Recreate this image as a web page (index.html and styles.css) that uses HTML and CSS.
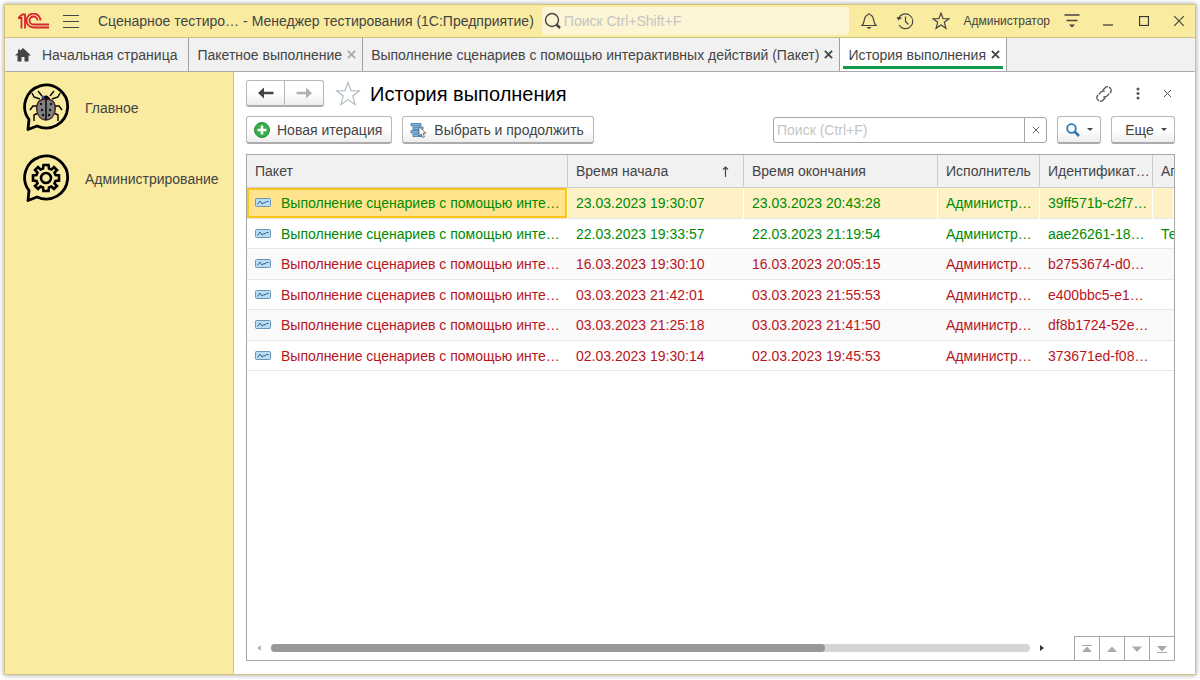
FILE: index.html
```
<!DOCTYPE html>
<html lang="ru">
  <head>
    <meta charset="utf-8" />
    <meta name="viewport" content="width=device-width, initial-scale=1.0" />
    <title>История выполнения</title>
    <link rel="stylesheet" href="styles.css" />
  </head>
  <body>
    <svg class="defs" width="0" height="0">
      <symbol id="pack" viewBox="0 0 16 10">
        <rect x="0.5" y="0.5" width="15" height="8" rx="1" fill="#b9dcf5" stroke="#6d94b5" />
        <path d="M2.5 6.5 5 3 7 6 9 4.5 10 5 11.500 3.500H13.500" fill="none" stroke="#2b6390" />
      </symbol>
      <symbol id="cross" viewBox="0 0 10 10">
        <path d="M1 1 9 9M9 1 1 9" fill="none" stroke="currentColor" />
      </symbol>
      <symbol id="star" viewBox="0 0 24 24">
        <path d="M12 1.500 14.800 9H22.500L16.400 13.800 18.600 21.800 12 17.200 5.400 21.800 7.600 13.800 1.500 9H9.200Z" fill="none" stroke="currentColor" />
      </symbol>
      <symbol id="bubble" viewBox="0 0 48 52">
        <path d="M6 37.500A21.500 21.500 0 1 1 14 44L5 47.500Z" fill="none" stroke="#000" stroke-width="2.800" stroke-linejoin="round" />
      </symbol>
    </svg>

    <div class="window">
      <header class="titlebar">
        <svg class="logo" viewBox="0 0 32 16" fill="none" stroke="#d9272e" stroke-width="1.800">
          <path d="M0 5H3.500V15.500M1 4 4.500 1.500H7V15.500" />
          <path d="M22.500 7.500A7 7 0 1 0 15.500 14.500H31" />
          <path d="M19.500 7.500A4 4 0 1 0 15.500 11.500H31" />
        </svg>
        <button class="icon-btn menu" aria-label="Меню">
          <svg width="16" height="13" viewBox="0 0 16 13"><path d="M0 .5H16M0 6.500H16M0 12.500H16" stroke="#444" /></svg>
        </button>
        <span class="app-name">Сценарное тестиро…</span>
        <span class="app-title">- Менеджер тестирования (1С:Предприятие)</span>
        <label class="global-search">
          <svg width="18" height="18" viewBox="0 0 18 18" fill="none" stroke="#444"><circle cx="8" cy="8" r="6.500" stroke-width="1.400" /><path d="M12.500 12.500 16 16" stroke-width="2.500" /></svg>
          <input type="text" placeholder="Поиск Ctrl+Shift+F" aria-label="Поиск" />
        </label>
        <div class="tools">
          <button class="icon-btn" aria-label="Оповещения">
            <svg width="18" height="18" viewBox="0 0 18 18"><path d="M2 13.500C4.500 11 4 8 5 5.500 6 3 7.500 3.500 8 2.500Q9 1 10 2.500C10.500 3.500 12 3 13 5.500 14 8 13.500 11 16 13.500Z" fill="none" stroke="#444" stroke-width="1.200" /><path d="M6.500 15H11.500L9 17.200Z" fill="#444" /></svg>
          </button>
          <button class="icon-btn" aria-label="История">
            <svg width="18" height="18" viewBox="0 0 18 18" fill="none" stroke="#444" stroke-width="1.200"><path d="M2.500 6.500A7.400 7.400 0 1 1 3 13M9.500 4.500V9.500L12.500 12.500" /><path d="M.5 5 6 5.500 2.500 8.500Z" fill="#444" stroke="none" /></svg>
          </button>
          <button class="icon-btn" aria-label="Избранное">
            <svg width="18" height="18" viewBox="0 0 24 24" class="fav"><use href="#star" /></svg>
          </button>
          <span class="user">Администратор</span>
          <button class="icon-btn options" aria-label="Настройки">
            <svg width="16" height="14" viewBox="0 0 16 14"><path d="M.5 1H15.500M2.500 6.500H13.500" stroke="#444" stroke-width="1.400" /><path d="M5 10.500H11L8 13.500Z" fill="#444" /></svg>
          </button>
          <button class="icon-btn" aria-label="Свернуть">
            <svg width="10" height="10" viewBox="0 0 10 10"><path d="M0 9H10" stroke="#333" stroke-width="1.200" /></svg>
          </button>
          <button class="icon-btn" aria-label="Развернуть">
            <svg width="10" height="10" viewBox="0 0 10 10"><rect x=".5" y=".5" width="9" height="9" fill="none" stroke="#333" stroke-width="1.200" /></svg>
          </button>
          <button class="icon-btn quit" aria-label="Закрыть">
            <svg width="12" height="12"><use href="#cross" /></svg>
          </button>
        </div>
      </header>

      <nav class="tabs">
        <a class="tab home" href="#">
          <svg width="16" height="14" viewBox="0 0 16 14"><path d="M8 0 16 7.500H13.500V13.500H9.500V9H6.500V13.500H2.500V7.500H0L3 4.700V1.500H5V2.800Z" fill="#444" /></svg>
          Начальная страница
        </a>
        <a class="tab" href="#">Пакетное выполнение <svg class="close pale"><use href="#cross" /></svg></a>
        <a class="tab" href="#">Выполнение сценариев с помощью интерактивных действий (Пакет) <svg class="close"><use href="#cross" /></svg></a>
        <a class="tab active" href="#">История выполнения <svg class="close"><use href="#cross" /></svg></a>
      </nav>

      <div class="body">
        <aside class="sections">
          <a class="section" href="#">
            <svg width="48" height="52" viewBox="0 0 48 52">
              <use href="#bubble" />
              <g transform="translate(-1 0)">
                <path d="M20 14 16 9M28 14 32 9M18 17 12 15 10 11M30 17 36 15 38 11M15 24H11L8 28M33 24H37L40 28M16 31 12 33V39M32 31 36 33V39" fill="none" stroke="#000" stroke-width="1.400" />
                <path d="M19 18Q24 9 29 18Z" fill="#000" />
                <path d="M24 17C33 17 34 24 33 29 32 35 28 38 24 38 20 38 16 35 15 29 14 24 15 17 24 17Z" fill="#808080" stroke="#4a1c1c" stroke-width="1.400" />
                <path d="M24 17V38" stroke="#000" stroke-width="1.400" />
                <g fill="#111"><circle cx="19" cy="22" r="1.200" /><circle cx="29" cy="22" r="1.200" /><circle cx="20" cy="28" r="1.200" /><circle cx="28" cy="28" r="1.200" /><circle cx="21" cy="33" r="1.200" /><circle cx="27" cy="33" r="1.200" /></g>
                <circle cx="21" cy="15" r="1.500" fill="#2456a8" />
              </g>
            </svg>
            Главное
          </a>
          <a class="section" href="#">
            <svg width="48" height="52" viewBox="0 0 48 52">
              <use href="#bubble" />
              <g transform="translate(23 25)" fill="none" stroke="#000" stroke-width="2.600">
                <path d="M-2.500-13H2.500L3-9.500 5.500-8.500 8-11 11-8 8.500-5.500 9.500-3 13-2.500V2.500L9.500 3 8.500 5.500 11 8 8 11 5.500 8.500 3 9.500 2.500 13H-2.500L-3 9.500-5.500 8.500-8 11-11 8-8.500 5.500-9.500 3-13 2.500V-2.500L-9.500-3-8.500-5.500-11-8-8-11-5.500-8.500-3-9.500Z" />
                <circle r="5" />
              </g>
            </svg>
            Администрирование
          </a>
        </aside>

        <main class="content">
          <div class="heading">
            <div class="history">
              <button class="btn" aria-label="Назад"><svg width="16" height="12" viewBox="0 0 16 12"><path d="M0 6 6 .5V4.800H15.500V7.200H6V11.500Z" fill="#444" /></svg></button>
              <button class="btn" aria-label="Вперед"><svg width="16" height="12" viewBox="0 0 16 12"><path d="M16 6 10 .5V4.800H.5V7.200H10V11.500Z" fill="#b0b0b0" /></svg></button>
            </div>
            <button class="icon-btn star" aria-label="В избранное"><svg width="26" height="26"><use href="#star" /></svg></button>
            <h1>История выполнения</h1>
            <div class="heading-tools">
              <button class="icon-btn" aria-label="Ссылка">
                <svg width="18" height="18" viewBox="0 0 18 18" fill="none" stroke="#555" stroke-width="1.300"><path d="M7.500 5.500 10.500 2.500C13 0 18 4 15.500 7.500L12 11Q10 12.500 8 11.500M10.500 12.500 7.500 15.500C5 18 0 14 2.500 10.500L6 7Q8 5.500 10 6.500" stroke-dasharray="7 1" /></svg>
              </button>
              <button class="icon-btn" aria-label="Еще">
                <svg width="4" height="13" viewBox="0 0 4 13" fill="#555"><circle cx="2" cy="2" r="1.500" /><circle cx="2" cy="6.500" r="1.500" /><circle cx="2" cy="11" r="1.500" /></svg>
              </button>
              <button class="icon-btn" aria-label="Закрыть"><svg width="9" height="9"><use href="#cross" /></svg></button>
            </div>
          </div>

          <div class="commands">
            <button class="btn">
              <svg width="16" height="16" viewBox="0 0 16 16"><circle cx="8" cy="8" r="7.500" fill="#35ad49" stroke="#26923a" /><path d="M8 3.500V12.500M3.500 8H12.500" stroke="#fff" stroke-width="2.600" /></svg>
              Новая итерация
            </button>
            <button class="btn">
              <svg width="17" height="16" viewBox="0 0 17 16"><path d="M1 1.500H11V4H1ZM3 5H13V7.500H3ZM1 8.500H11V11H1ZM3 12H12V14.500H3Z" fill="#7db4e0" stroke="#3a77a8" stroke-width=".8" /><path d="M9 4.500V14L11.200 12 12.700 15.500 14.500 14.700 13 11.300H16Z" fill="#fff" stroke="#555" stroke-width=".8" /></svg>
              Выбрать и продолжить
            </button>
            <div class="search">
              <input type="text" placeholder="Поиск (Ctrl+F)" aria-label="Поиск в списке" />
              <button aria-label="Очистить"><svg width="8" height="8"><use href="#cross" /></svg></button>
            </div>
            <button class="btn find" aria-label="Найти">
              <svg width="14" height="14" viewBox="0 0 14 14" fill="none" stroke="#2c77b0"><circle cx="5.500" cy="5.500" r="4.300" stroke-width="1.800" /><path d="M8.500 8.500 13 13" stroke-width="2.600" /></svg>
              <span class="caret"></span>
            </button>
            <button class="btn more">Еще <span class="caret"></span></button>
          </div>

          <div class="list">
            <table>
              <colgroup>
                <col class="c-pack" /><col class="c-start" /><col class="c-end" /><col class="c-user" /><col class="c-id" /><col />
              </colgroup>
              <thead>
                <tr>
                  <th>Пакет</th>
                  <th><div class="sorted">Время начала <svg width="7" height="11" viewBox="0 0 7 11"><path d="M3.500 11V1M1 3.500 3.500 1 6 3.500" fill="none" stroke="#444" stroke-width="1.200" /></svg></div></th>
                  <th>Время окончания</th>
                  <th>Исполнитель</th>
                  <th>Идентификат…</th>
                  <th class="cut">Агент</th>
                </tr>
              </thead>
              <tbody>
                <tr class="ok selected">
                  <td><svg class="pack"><use href="#pack" /></svg>Выполнение сценариев с помощью инте…</td>
                  <td>23.03.2023 19:30:07</td><td>23.03.2023 20:43:28</td><td>Администр…</td><td>39ff571b-c2f7…</td><td></td>
                </tr>
                <tr class="ok">
                  <td><svg class="pack"><use href="#pack" /></svg>Выполнение сценариев с помощью инте…</td>
                  <td>22.03.2023 19:33:57</td><td>22.03.2023 21:19:54</td><td>Администр…</td><td>aae26261-18…</td><td class="cut">Тест</td>
                </tr>
                <tr class="fail">
                  <td><svg class="pack"><use href="#pack" /></svg>Выполнение сценариев с помощью инте…</td>
                  <td>16.03.2023 19:30:10</td><td>16.03.2023 20:05:15</td><td>Администр…</td><td>b2753674-d0…</td><td></td>
                </tr>
                <tr class="fail">
                  <td><svg class="pack"><use href="#pack" /></svg>Выполнение сценариев с помощью инте…</td>
                  <td>03.03.2023 21:42:01</td><td>03.03.2023 21:55:53</td><td>Администр…</td><td>e400bbc5-e1…</td><td></td>
                </tr>
                <tr class="fail">
                  <td><svg class="pack"><use href="#pack" /></svg>Выполнение сценариев с помощью инте…</td>
                  <td>03.03.2023 21:25:18</td><td>03.03.2023 21:41:50</td><td>Администр…</td><td>df8b1724-52e…</td><td></td>
                </tr>
                <tr class="fail">
                  <td><svg class="pack"><use href="#pack" /></svg>Выполнение сценариев с помощью инте…</td>
                  <td>02.03.2023 19:30:14</td><td>02.03.2023 19:45:53</td><td>Администр…</td><td>373671ed-f08…</td><td></td>
                </tr>
              </tbody>
            </table>
            <div class="list-footer">
              <svg width="4" height="6" viewBox="0 0 4 6"><path d="M4 0V6L0 3Z" fill="#bbb" /></svg>
              <div class="track"><div class="thumb"></div></div>
              <svg width="4" height="6" viewBox="0 0 4 6"><path d="M0 0V6L4 3Z" fill="#333" /></svg>
              <div class="pager">
                <button aria-label="В начало"><svg width="10" height="8" viewBox="0 0 10 8"><path d="M0 .5H10" stroke="#aaa" /><path d="M0 7 5 1.500 10 7Z" fill="#aaa" /></svg></button>
                <button aria-label="Вверх"><svg width="10" height="8" viewBox="0 0 10 8"><path d="M0 7 5 1.500 10 7Z" fill="#aaa" /></svg></button>
                <button aria-label="Вниз"><svg width="10" height="8" viewBox="0 0 10 8"><path d="M0 1.500 5 7 10 1.500Z" fill="#aaa" /></svg></button>
                <button aria-label="В конец"><svg width="10" height="8" viewBox="0 0 10 8"><path d="M0 7.500H10" stroke="#aaa" /><path d="M0 1 5 6.500 10 1Z" fill="#aaa" /></svg></button>
              </div>
            </div>
          </div>
        </main>
      </div>
    </div>
  </body>
</html>
```
FILE: styles.css
```
* {
  box-sizing: border-box;
}
body {
  margin: 0;
  padding: 4px 4px 5px;
  height: 100vh;
  background: #fff;
  color: #444;
  font: 14px/18px "Liberation Sans", Arial, sans-serif;
}
button,
input {
  font: inherit;
  color: inherit;
}
a {
  color: inherit;
  text-decoration: none;
}
svg {
  flex: none;
}
.defs {
  position: absolute;
}
.window {
  display: flex;
  flex-direction: column;
  height: 100%;
  border: 1px solid #d3c57e;
  background: #fff;
  box-shadow: 0 0 5px rgba(0, 0, 0, 0.4);
}

/* title bar */
.titlebar {
  display: flex;
  align-items: center;
  height: 33px;
  padding-left: 13px;
  background: #f9eb9f;
  border-bottom: 1px solid #cfc27f;
}
.icon-btn {
  display: flex;
  align-items: center;
  justify-content: center;
  padding: 0;
  border: 0;
  background: none;
}
.logo {
  width: 32px;
  height: 16px;
}
.menu {
  margin: 0 19px 0 13px;
}
.app-name,
.app-title {
  white-space: nowrap;
}
.app-title {
  margin-left: 4px;
}
.global-search {
  display: flex;
  flex: 1;
  align-items: center;
  height: 28px;
  margin: 0 2px 0 8px;
  padding-left: 2px;
  border-radius: 3px;
  background: #fdf5d3;
}
.global-search input {
  flex: 1;
  min-width: 0;
  padding: 0 2px;
  border: 0;
  background: none;
}
input::placeholder {
  color: #c4c4c4;
  opacity: 1;
}
.tools {
  display: flex;
  align-items: center;
}
.tools .icon-btn {
  width: 36px;
  height: 28px;
}
.tools .quit {
  width: 33px;
}
.user {
  margin: 0 4px;
  font-size: 12px;
}
.fav {
  stroke-width: 1.6;
}

/* open pages */
.tabs {
  display: flex;
  height: 34px;
  background: #f1f1f1;
  border-bottom: 1px solid #aaa;
}
.tab {
  display: flex;
  align-items: center;
  gap: 5px;
  padding: 0 6px 0 8px;
  border-right: 1px solid #a0a0a0;
  white-space: nowrap;
}
.tab.home {
  gap: 11px;
  padding: 0 11px 0 10px;
}
.tab.active {
  position: relative;
  background: #fff;
}
.tab.active::after {
  content: "";
  position: absolute;
  left: 3px;
  right: 3px;
  bottom: 2px;
  height: 3px;
  background: #129a4c;
}
.close {
  width: 9px;
  height: 9px;
  stroke-width: 2;
}
.close.pale {
  color: #aaa;
}

.body {
  display: flex;
  flex: 1;
  min-height: 0;
}
.sections {
  display: flex;
  flex-direction: column;
  gap: 19px;
  width: 229px;
  padding: 10px 0 0 18px;
  background: #f9eb9f;
  border-right: 1px solid #d3c57e;
}
.section {
  display: flex;
  align-items: center;
  gap: 14px;
}

/* page */
.content {
  display: flex;
  flex: 1;
  flex-direction: column;
  min-width: 0;
  padding: 8px 20px 13px 12px;
}
.heading,
.commands {
  display: flex;
  align-items: center;
}
.heading {
  height: 27px;
  margin-bottom: 9px;
}
.btn {
  display: flex;
  align-items: center;
  justify-content: center;
  gap: 7px;
  height: 28px;
  padding: 0 9px 0 7px;
  border: 1px solid #b8b8b8;
  border-bottom: 2px solid #ababab;
  border-radius: 3px;
  background: linear-gradient(#fff 50%, #ededed);
  white-space: nowrap;
}
.history {
  display: flex;
}
.history .btn {
  width: 39px;
  height: 27px;
  padding: 0;
}
.history .btn:first-child {
  border-radius: 3px 0 0 3px;
}
.history .btn:last-child {
  border-left: 0;
  border-radius: 0 3px 3px 0;
}
.star {
  margin: 0 9px 0 11px;
  color: #a9b7bf;
}
h1 {
  margin: 0;
  color: #000;
  font-size: 20px;
  font-weight: normal;
  line-height: 24px;
}
.heading-tools {
  display: flex;
  gap: 23px;
  margin-left: auto;
  padding-right: 3px;
}
.commands {
  gap: 10px;
  margin-bottom: 10px;
}
.search {
  display: flex;
  width: 274px;
  height: 26px;
  margin-left: auto;
  border: 1px solid #a6a6a6;
  border-radius: 3px;
}
.search input {
  flex: 1;
  min-width: 0;
  padding: 0 3px;
  border: 0;
  background: none;
}
.search button {
  display: flex;
  align-items: center;
  justify-content: center;
  width: 22px;
  padding: 0;
  border: 0;
  border-left: 1px solid #a6a6a6;
  background: none;
}
.btn.find {
  width: 44px;
  padding: 0 4px;
}
.btn.more {
  width: 64px;
  padding: 0 4px 0 10px;
}
.caret {
  border: 3px solid transparent;
  border-top-color: #444;
  border-bottom: 0;
}

/* list */
.list {
  display: flex;
  flex: 1;
  flex-direction: column;
  min-height: 0;
  overflow: hidden;
  border: 1px solid #a6a6a6;
}
table {
  width: 100%;
  table-layout: fixed;
  border-collapse: separate;
  border-spacing: 0;
}
.c-pack {
  width: 321px;
}
.c-start {
  width: 176px;
}
.c-end {
  width: 194px;
}
.c-user {
  width: 102px;
}
.c-id {
  width: 113px;
}
th,
td {
  padding: 0 2px 0 8px;
  overflow: hidden;
  text-align: left;
  text-overflow: ellipsis;
  white-space: nowrap;
}
th {
  height: 33px;
  background: #f1f1f1;
  border-right: 1px solid #ccc;
  border-bottom: 1px solid #ccc;
  font-weight: normal;
}
th:last-child {
  border-right: 0;
}
.cut {
  padding-right: 0;
  text-overflow: clip;
}
.sorted {
  display: flex;
  align-items: center;
  justify-content: space-between;
  padding-right: 12px;
}
td {
  height: 31px;
  border-bottom: 1px solid #e6e6e6;
}
tr:nth-child(even) td {
  height: 30px;
}
tr:nth-child(odd) td {
  background: #fafafa;
}
.ok {
  color: #008a00;
}
.fail {
  color: #b8141e;
}
.selected td:nth-child(n) {
  background: #fdf1c5;
  border-right: 1px solid #fff;
}
.selected td:first-child {
  background: #ffe48d;
  box-shadow: inset 0 0 0 2px #fbc619;
}
.pack {
  width: 16px;
  height: 10px;
  margin-right: 10px;
}
.list-footer {
  display: flex;
  align-items: center;
  height: 24px;
  margin-top: auto;
  padding-left: 10px;
}
.track {
  flex: 1;
  height: 8px;
  margin: 0 10px;
  border-radius: 4px;
  background: #d5d5d5;
}
.thumb {
  width: 73%;
  height: 8px;
  border-radius: 4px;
  background: #999;
}
.pager {
  display: flex;
  height: 24px;
  margin-left: 30px;
}
.pager button {
  display: flex;
  align-items: center;
  justify-content: center;
  width: 25px;
  padding: 0;
  border: 0;
  border-top: 1px solid #a6a6a6;
  border-left: 1px solid #a6a6a6;
  background: none;
}
```
